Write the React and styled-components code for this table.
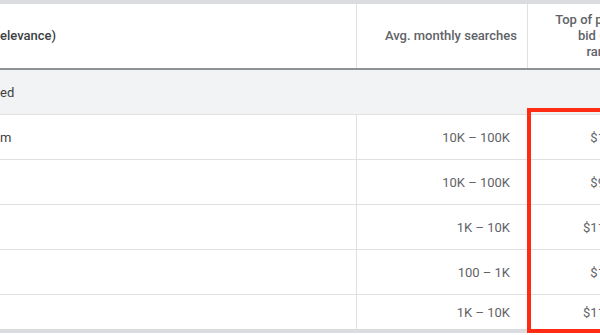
import React from "react";
import styled, { createGlobalStyle } from "styled-components";

const GlobalStyle = createGlobalStyle`
  html, body {
    margin: 0;
    padding: 0;
    background: #ffffff;
  }
  body {
    font-family: Roboto, "Liberation Sans", Arial, sans-serif;
  }
`;

const rows = [
  { keyword: "m", searches: "10K – 100K", bid: "$1.62" },
  { keyword: "", searches: "10K – 100K", bid: "$9.48" },
  { keyword: "", searches: "1K – 10K", bid: "$11.05" },
  { keyword: "", searches: "100 – 1K", bid: "$1.90" },
  { keyword: "", searches: "1K – 10K", bid: "$11.37" },
];

const App = () => (
  <>
    <GlobalStyle />
    <Viewport>
      <Table>
        <HeaderRow>
          <HeadCell $strong>elevance)</HeadCell>
          <HeadCell $align="right" $divider>
            Avg. monthly searches
          </HeadCell>
          <HeadCell $align="right" $divider>
            Top of page
            <br />
            bid (low
            <br />
            range)
          </HeadCell>
        </HeaderRow>
        <GroupRow>ed</GroupRow>
        {rows.map((row, i) => (
          <BodyRow key={i} $last={i === rows.length - 1}>
            <Cell $strong>{row.keyword}</Cell>
            <Cell $align="right" $divider>
              {row.searches}
            </Cell>
            <Cell $align="right" $divider $narrow>
              {row.bid}
            </Cell>
          </BodyRow>
        ))}
      </Table>
      <Highlight />
    </Viewport>
  </>
);

const Viewport = styled.div`
  position: relative;
  width: 600px;
  height: 335px;
  overflow: hidden;
  background: #ffffff;
`;

const Table = styled.div`
  width: 634px;
  display: flex;
  flex-direction: column;
  border-top: 4px solid #dadce0;
  border-bottom: 4px solid #dadce0;
`;

const HeaderRow = styled.div`
  display: grid;
  grid-template-columns: 356px 171px 107px;
  height: 64px;
  border-bottom: 2px solid #8e9297;
`;

const HeadCell = styled.div`
  display: flex;
  align-items: center;
  justify-content: ${(p) => (p.$align === "right" ? "flex-end" : "flex-start")};
  text-align: ${(p) => p.$align || "left"};
  padding: ${(p) => (p.$align === "right" ? "0 10px 0 0" : "0")};
  border-left: ${(p) => (p.$divider ? "1px solid #e0e0e0" : "none")};
  font-size: 13px;
  line-height: 16px;
  font-weight: 500;
  color: ${(p) => (p.$strong ? "#3c4043" : "#5f6368")};
  white-space: nowrap;
`;

const GroupRow = styled.div`
  display: flex;
  align-items: center;
  height: 44px;
  background: #f1f3f4;
  border-bottom: 1px solid #e0e0e0;
  font-size: 13px;
  color: #3c4043;
`;

const BodyRow = styled.div`
  display: grid;
  grid-template-columns: 356px 171px 107px;
  height: ${(p) => (p.$last ? "34px" : "44px")};
  border-bottom: ${(p) => (p.$last ? "none" : "1px solid #e0e0e0")};
`;

const Cell = styled.div`
  display: flex;
  align-items: center;
  justify-content: ${(p) => (p.$align === "right" ? "flex-end" : "flex-start")};
  padding: ${(p) => (p.$align === "right" ? (p.$narrow ? "0 11px 0 0" : "0 17px 0 0") : "0")};
  border-left: ${(p) => (p.$divider ? "1px solid #e0e0e0" : "none")};
  font-size: 13px;
  color: ${(p) => (p.$strong ? "#3c4043" : "#5f6368")};
  white-space: nowrap;
`;

const Highlight = styled.div`
  position: absolute;
  left: 527px;
  top: 108px;
  width: 120px;
  height: 217px;
  border: 4px solid #ff2b12;
`;

export default App;
